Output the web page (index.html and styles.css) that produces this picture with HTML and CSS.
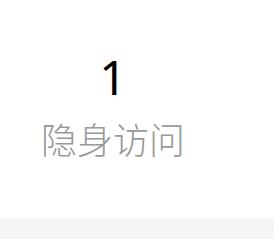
FILE: index.html
```html
<!DOCTYPE html>
<html lang="zh">
<head>
    <meta charset="UTF-8">
    <meta name="viewport" content="width=device-width, initial-scale=1.0">
    <title>隐身访问</title>
    <link rel="stylesheet" href="styles.css">
</head>
<body>
    <!-- Stat block -->
    <section class="stats">
        <div class="stat-item">
            <div class="stat-num">1</div>
            <div class="stat-label">隐身访问</div>
        </div>
    </section>

    <!-- Bottom strip -->
    <div class="footer-strip"></div>
</body>
</html>
```

FILE: styles.css
```css
:root {
    --text-color: #000000;
    --label-color: #999999;
    --strip-color: #f5f5f5;
}

body {
    font-family: 'Noto Sans', 'Noto Sans CJK SC', sans-serif;
    margin: 0;
    padding: 0;
    background-color: #ffffff;
    color: var(--text-color);
}

.stats {
    display: flex;
    height: 218px;
    box-sizing: border-box;
    padding-top: 48px;
}

.stat-item {
    width: 226px;
    text-align: center;
}

.stat-num {
    font-size: 48px;
    line-height: 58px;
}

.stat-label {
    margin-top: 10px;
    font-size: 36px;
    line-height: 50px;
    font-weight: 300;
    color: var(--label-color);
}

.footer-strip {
    height: 21px;
    background-color: var(--strip-color);
}
```
